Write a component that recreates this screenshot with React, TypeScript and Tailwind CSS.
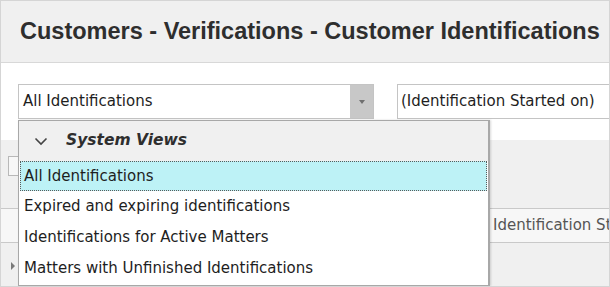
import React from "react";

const tahoma = { fontFamily: '"DejaVu Sans", Tahoma, sans-serif' };

export default function App() {
  return (
    <div className="w-[610px] h-[287px] overflow-hidden bg-[#f0f0f0]">
      <div className="relative w-[610px] h-[287px] border border-[#d5d5d5] bg-white box-border overflow-hidden flex flex-col">
        {/* Header */}
        <div className="h-[62px] shrink-0 bg-[#f0f0f0] border-b border-[#d8d8d8] flex items-center pl-[19px]">
          <div
            className="text-[23.5px] leading-none font-bold text-[#2e2e2e] whitespace-nowrap"
            style={{ fontFamily: '"Liberation Sans", Arial, sans-serif' }}
          >
            Customers - Verifications - Customer Identifications
          </div>
        </div>

        {/* Filter row */}
        <div className="flex pt-[21px] pl-[17px] gap-[23px] shrink-0" style={tahoma}>
          <div className="w-[356px] shrink-0 h-[35px] border border-[#c4c4c4] flex bg-white">
            <div className="flex-1 flex items-center pl-[4px] text-[15px] text-[#1e1e1e] whitespace-nowrap">All Identifications</div>
            <div className="w-[23px] bg-[#c8c8c8] flex items-center justify-center">
              <div className="w-0 h-0 border-l-[3.5px] border-r-[3.5px] border-t-[4px] border-l-transparent border-r-transparent border-t-[#6f6f6f]" />
            </div>
          </div>
          <div className="w-[240px] shrink-0 h-[35px] border border-[#c4c4c4] flex items-center pl-[3px] text-[15px] text-[#1e1e1e] bg-white whitespace-nowrap">
            (Identification Started on)
          </div>
        </div>

        <div className="h-[21px] shrink-0" />

        {/* Gray panel */}
        <div className="h-[68px] shrink-0 bg-[#f0f0f0] pl-[7px] pt-[16px]">
          <div className="w-[30px] h-[20px] border border-[#b8b8b8] bg-[#f7f7f7]" />
        </div>

        {/* Grid header */}
        <div className="h-[35px] shrink-0 border-t border-b border-[#c9c9c9] bg-[#f7f7f7] flex" style={tahoma}>
          <div className="w-[18px] border-r border-[#d0d0d0]" />
          <div className="flex-1" />
          <div className="w-[117px] flex items-center pl-[1px] text-[15px] text-[#555] whitespace-nowrap overflow-hidden">
            Identification Started on
          </div>
        </div>

        {/* Grid row */}
        <div className="flex-1 bg-[#f0f0f0] flex">
          <div className="w-[18px] border-r border-[#d0d0d0] flex items-center pl-[10px] pt-[2px]">
            <div className="w-0 h-0 border-t-[4px] border-b-[4px] border-l-[4px] border-t-transparent border-b-transparent border-l-[#7a7a7a]" />
          </div>
        </div>

        {/* Dropdown popup */}
        <div
          className="absolute left-[17px] top-[119px] w-[472px] bottom-0 bg-white border border-[#a8a8a8] border-r-2 shadow-[1px_0_2px_rgba(0,0,0,0.15)]"
          style={tahoma}
        >
          <div className="h-[40px] bg-[#f0f0f0] flex items-center">
            <svg width="14" height="9" viewBox="0 0 14 9" className="ml-[15px]">
              <path d="M1.5 1.5 L7 7 L12.5 1.5" fill="none" stroke="#444" strokeWidth="1.6" />
            </svg>
            <span className="ml-[18px] text-[15.5px] font-bold italic text-[#2e2e2e]">System Views</span>
          </div>
          <div className="h-[30px] mx-[1px] bg-[#bdf2f6] border border-dotted border-[#5a5a5a] flex items-center pl-[3px] text-[15px] text-[#1e1e1e]">
            All Identifications
          </div>
          <div className="h-[31px] flex items-center pl-[5px] text-[15px] text-[#1e1e1e]">
            Expired and expiring identifications
          </div>
          <div className="h-[31px] flex items-center pl-[5px] text-[15px] text-[#1e1e1e]">
            Identifications for Active Matters
          </div>
          <div className="h-[31px] flex items-center pl-[5px] text-[15px] text-[#1e1e1e]">
            Matters with Unfinished Identifications
          </div>
        </div>
      </div>
    </div>
  );
}
